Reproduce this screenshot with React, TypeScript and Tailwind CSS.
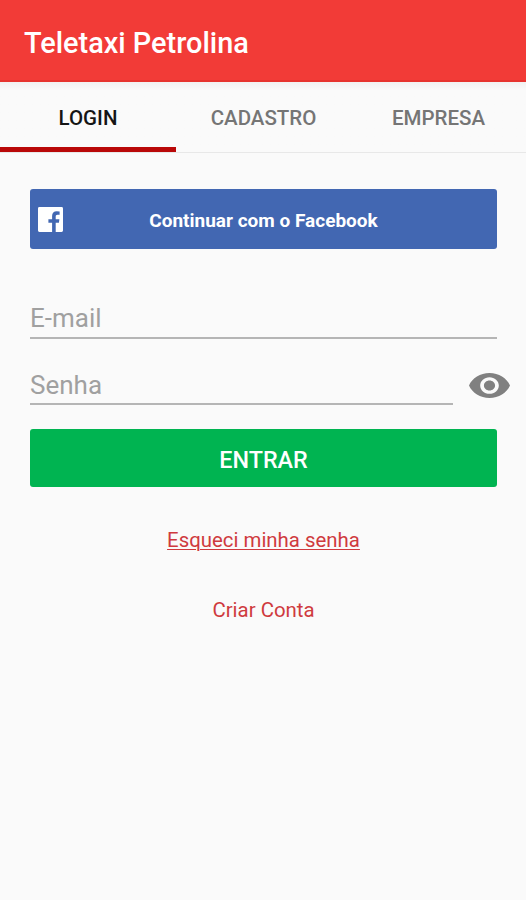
export default function App() {
  return (
    <div className="flex h-[900px] w-[526px] flex-col overflow-hidden bg-[#fafafa] font-[Roboto,sans-serif]">
      <header className="flex h-[82px] shrink-0 items-center border-b-2 border-[#e7342f] bg-[#f23b37] pl-6 pt-[7px] text-[28.9px] font-medium text-white">
        <h1>Teletaxi Petrolina</h1>
      </header>
      <nav className="flex h-[71px] shrink-0 border-b border-[#e8e8e8] bg-linear-to-b from-[#f1f1f1] to-[#fafafa] to-[8px] text-[20.5px] font-medium text-[#757575]">
        <button className="w-44 border-b-[5px] border-[#b90808] pt-[8px] text-[#151515]">LOGIN</button>
        <button className="w-[175px] border-b-[5px] border-transparent pt-[8px]">CADASTRO</button>
        <button className="w-[175px] border-b-[5px] border-transparent pt-[8px]">EMPRESA</button>
      </nav>
      <main className="flex flex-col pl-[30px] pt-9">
        <button className="flex h-[60px] w-[467px] items-center rounded-[3px] bg-[#4267b2] pl-2 text-white">
          <svg width="25" height="25" viewBox="0 0 25 25">
            <path fill="currentColor" d="M1.400 0h22.200Q25 0 25 1.400v22.200Q25 25 23.600 25h-5.900v-9.300h3.200l.5-3.500h-3.700V9.700c0-1.200.4-1.900 1.900-1.900h2V4.500q-1-.2-2.900-.2c-2.900 0-4.600 1.800-4.600 4.800v3.100h-3.700v3.500h3.700V25H1.400Q0 25 0 23.600V1.400Q0 0 1.400 0z" />
          </svg>
          <span className="mr-[33px] flex-1 pt-[4px] text-center text-[19px] font-bold">Continuar com o Facebook</span>
        </button>
        <input aria-label="E-mail" placeholder="E-mail" className="mt-[49px] h-[41px] w-[467px] border-b-2 border-[#b5b5b5] text-[26px] outline-none placeholder:text-[#a0a0a0]" />
        <div className="mt-[25px] flex h-[41px] w-[480px] items-start">
          <input aria-label="Senha" placeholder="Senha" className="h-[41px] w-[423px] border-b-2 border-[#b5b5b5] pt-[2px] text-[26px] outline-none placeholder:text-[#a0a0a0]" />
          <svg className="ml-[16px] mt-[9px] shrink-0" width="41" height="25" viewBox="1 4.500 22 15" preserveAspectRatio="none">
            <path fill="#808080" d="M12 4.500C7 4.500 2.730 7.610 1 12c1.730 4.390 6 7.500 11 7.500s9.270-3.110 11-7.500c-1.730-4.390-6-7.500-11-7.500zM12 17c-2.760 0-5-2.240-5-5s2.240-5 5-5 5 2.240 5 5-2.240 5-5 5zm0-8c-1.660 0-3 1.340-3 3s1.340 3 3 3 3-1.340 3-3-1.340-3-3-3z" />
          </svg>
        </div>
        <button className="mt-[24px] h-[58px] w-[467px] rounded-[3px] bg-[#00b451] pt-[5px] text-[23.3px] font-medium text-white">ENTRAR</button>
        <a href="#senha" className="mt-[37px] h-8 w-[467px] text-center text-[20.4px] leading-8 text-[#cf3a3e] underline decoration-1 underline-offset-2">Esqueci minha senha</a>
        <a href="#conta" className="mt-[38px] h-8 w-[467px] text-center text-[20.4px] leading-8 text-[#cf3a3e]">Criar Conta</a>
      </main>
    </div>
  );
}
